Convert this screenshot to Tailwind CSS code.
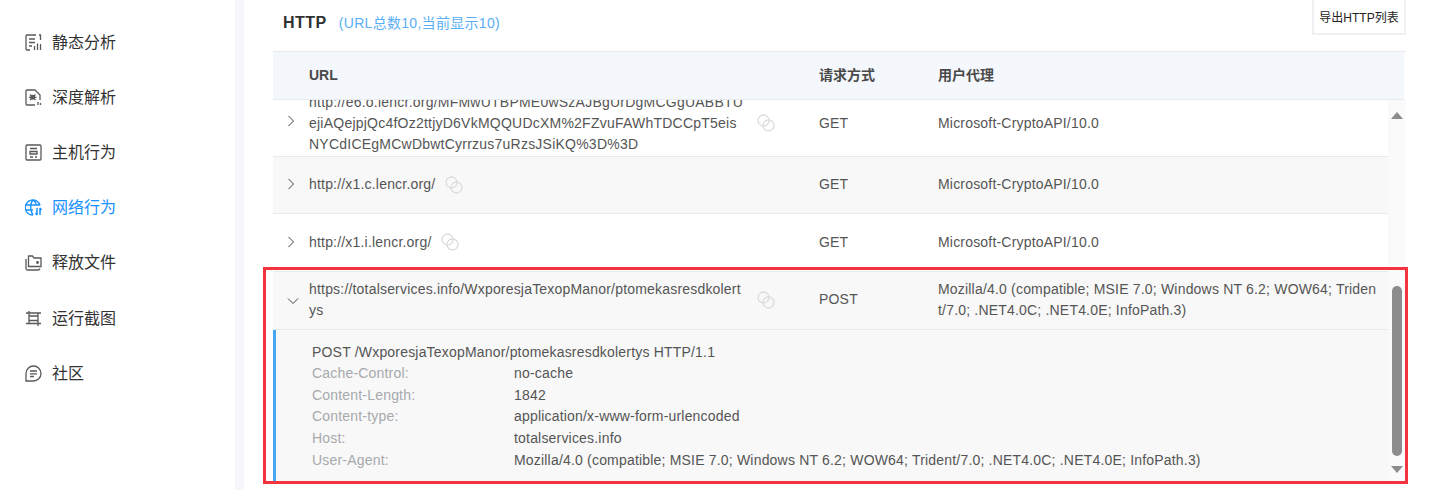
<!DOCTYPE html>
<html lang="zh">
<head>
<meta charset="utf-8">
<script src="https://cdn.jsdelivr.net/npm/@tailwindcss/browser@4"></script>
</head>
<body class="m-0 bg-white">
<div class="relative flex h-[490px] w-[1431px] overflow-hidden bg-white font-['Liberation_Sans','Noto_Sans_CJK_SC',sans-serif] text-sm tracking-[0.19px] text-[#555]">
  <aside class="w-[235px] shrink-0 pt-[15px] text-base tracking-normal text-[#333]">
    <div class="flex h-[55px] items-center gap-[10px] pl-[25px]">
      <svg class="size-[17px]" viewBox="0 0 17 17" fill="none" stroke="#595959" stroke-width="1.3"><path d="M11 1H2a1 1 0 0 0-1 1v13a1 1 0 0 0 1 1h3M14 1h1.500v5M4 5h6M4 8.500h6M4 12h3M9.500 16v-4M12.500 16V9.500M15.500 16v-6"/></svg>
      <span>静态分析</span>
    </div>
    <div class="flex h-[55px] items-center gap-[10px] pl-[25px]">
      <svg class="size-[17px]" viewBox="0 0 17 17" fill="none" stroke="#595959" stroke-width="1.3"><path d="M10 16H2a1 1 0 0 1-1-1V2a1 1 0 0 1 1-1h8l5 5v5M5 5.500l5.500 5.500M10.500 5.500 5 11M4 8.300h7.500M13 16v-3M15.500 16v-2"/><circle cx="7.700" cy="8.300" r="1.800" fill="#595959"/></svg>
      <span>深度解析</span>
    </div>
    <div class="flex h-[55px] items-center gap-[10px] pl-[25px]">
      <svg class="size-[17px]" viewBox="0 0 17 17" fill="none" stroke="#595959" stroke-width="1.3"><rect x="1" y="1" width="15" height="15" rx="1"/><path d="M5 4.500h7M5 7.500h7v2.500H5zM5 13h3M10 13h2"/></svg>
      <span>主机行为</span>
    </div>
    <div class="flex h-[55px] items-center gap-[10px] pl-[25px] text-[#1890ff]">
      <svg class="size-[17px]" viewBox="0 0 17 17" fill="none" stroke="#1890ff" stroke-width="1.3"><path d="M15 6.500A7.500 7.500 0 1 0 8 16M1 6h14M1 11h7M8 1C5 4 5 12 8 16M8 1c2 1.500 3 3 3.500 5"/><path d="M12 9v7M15 9v7M10.500 14l1.500 2M16.500 11 15 9" stroke-width="1.500"/></svg>
      <span>网络行为</span>
    </div>
    <div class="flex h-[55px] items-center gap-[10px] pl-[25px]">
      <svg class="size-[17px]" viewBox="0 0 17 17" fill="none" stroke="#595959" stroke-width="1.3"><path d="M1 5v9.500a1.500 1.500 0 0 0 1.500 1.500H13a2 2 0 0 0 2-1.500"/><path d="M3.500 12.500V2h4l1.500 2h7v8.500z"/><circle cx="12.500" cy="8.500" r=".8" fill="#595959"/></svg>
      <span>释放文件</span>
    </div>
    <div class="flex h-[56px] items-center gap-[10px] pl-[25px] pt-[1px]">
      <svg class="size-[17px]" viewBox="0 0 17 17" fill="none" stroke="#595959" stroke-width="1.3"><path d="M1 3h15M1 13.500h15M4 1v12.500M13 3v13M4 6h9v4.500H4z"/></svg>
      <span>运行截图</span>
    </div>
    <div class="flex h-[55px] items-center gap-[10px] pl-[25px]">
      <svg class="size-[17px]" viewBox="0 0 17 17" fill="none" stroke="#595959" stroke-width="1.3"><path d="M1 16V8.500A7.500 7.500 0 1 1 8.500 16z"/><path d="M5 6h7M5 8.800h7M5 11.500h4"/></svg>
      <span>社区</span>
    </div>
  </aside>
  <div class="w-[9px] shrink-0 bg-[#f5f7fb]"></div>
  <main class="flex-1 pl-[29px]">
    <header class="flex h-[51px] items-start justify-between pr-[25px]">
      <div class="flex items-baseline pl-[10px] pt-[11px]">
        <span class="text-base font-bold tracking-[0.5px] text-[#303133]">HTTP</span>
        <span class="ml-[12px] tracking-[0.3px] text-[#5aaef5]">(URL总数10,当前显示10)</span>
      </div>
      <div class="-mt-[3px] flex h-[38px] w-[94px] items-center justify-center border-2 border-[#eef0f3] pt-[4px] text-xs tracking-normal whitespace-nowrap text-[#222]">导出HTTP列表</div>
    </header>
    <div class="w-[1133px] border-t border-[#e8eaed]">
      <div class="grid h-[48px] w-[1131px] grid-cols-[36px_510px_119px_1fr] items-center border-b border-[#e8eaed] bg-[#f4f7fb] pb-[2px] text-sm font-bold tracking-normal text-[#4a4a4a]">
        <span></span><span>URL</span><span>请求方式</span><span>用户代理</span>
      </div>
      <div class="relative h-[383px] overflow-hidden">
        <div class="-mt-[11px] mr-[18px]">
          <div class="grid h-[68px] grid-cols-[36px_510px_119px_1fr] items-center border-b border-[#e8eaed]">
            <div class="flex justify-center pb-[3px]"><svg class="h-[12px] w-[8px]" viewBox="0 0 8 12" fill="none" stroke="#444" stroke-width="1"><path d="M1.500 1l5 5-5 5"/></svg></div>
            <div class="flex items-center">
              <div class="w-[436px] pt-[1px] leading-[21px] tracking-[0.23px] break-all">http://e6.o.lencr.org/MFMwUTBPME0wSzAJBgUrDgMCGgUABBTU<br>ejiAQejpjQc4fOz2ttjyD6VkMQQUDcXM%2FZvuFAWhTDCCpT5eis<br>NYCdICEgMCwDbwtCyrrzus7uRzsJSiKQ%3D%3D</div>
              <svg class="ml-[12px] size-[18px]" viewBox="0 0 18 18" fill="none" stroke="#dcdcdc" stroke-width="1.300"><circle cx="6.500" cy="6.500" r="5.500"/><circle cx="11.500" cy="11.500" r="5.500"/></svg>
            </div>
            <span>GET</span><span>Microsoft-CryptoAPI/10.0</span>
          </div>
          <div class="grid h-[57px] grid-cols-[36px_510px_119px_1fr] items-center border-b border-[#e8eaed] bg-[#f8f8f8] pb-[2px]">
            <div class="flex justify-center"><svg class="h-[12px] w-[8px]" viewBox="0 0 8 12" fill="none" stroke="#444" stroke-width="1"><path d="M1.500 1l5 5-5 5"/></svg></div>
            <div class="flex items-center"><span>http://x1.c.lencr.org/</span><svg class="ml-[10px] mt-[1px] size-[18px]" viewBox="0 0 18 18" fill="none" stroke="#dcdcdc" stroke-width="1.300"><circle cx="6.500" cy="6.500" r="5.500"/><circle cx="11.500" cy="11.500" r="5.500"/></svg></div>
            <span>GET</span><span>Microsoft-CryptoAPI/10.0</span>
          </div>
          <div class="grid h-[58px] grid-cols-[36px_510px_119px_1fr] items-center border-b border-[#e8eaed] pb-[2px]">
            <div class="flex justify-center"><svg class="h-[12px] w-[8px]" viewBox="0 0 8 12" fill="none" stroke="#444" stroke-width="1"><path d="M1.500 1l5 5-5 5"/></svg></div>
            <div class="flex items-center"><span>http://x1.i.lencr.org/</span><svg class="ml-[10px] size-[18px]" viewBox="0 0 18 18" fill="none" stroke="#dcdcdc" stroke-width="1.300"><circle cx="6.500" cy="6.500" r="5.500"/><circle cx="11.500" cy="11.500" r="5.500"/></svg></div>
            <span>GET</span><span>Microsoft-CryptoAPI/10.0</span>
          </div>
          <div class="grid h-[58px] grid-cols-[36px_510px_119px_1fr] items-center border-b border-[#e8eaed] bg-[#f8f8f8] pb-[2px] leading-[21px]">
            <div class="flex justify-center pl-[3px] pt-[2px]"><svg class="size-[12px]" viewBox="0 0 12 12" fill="none" stroke="#444" stroke-width="1"><path d="M1 3.500l5 5 5-5"/></svg></div>
            <div class="flex items-center">
              <div class="w-[436px] break-all">https://totalservices.info/WxporesjaTexopManor/ptomekasresdkolertys</div>
              <svg class="ml-[12px] size-[18px]" viewBox="0 0 18 18" fill="none" stroke="#dcdcdc" stroke-width="1.300"><circle cx="6.500" cy="6.500" r="5.500"/><circle cx="11.500" cy="11.500" r="5.500"/></svg>
            </div>
            <span>POST</span>
            <span class="break-all pr-[10px]">Mozilla/4.0 (compatible; MSIE 7.0; Windows NT 6.2; WOW64; Trident/7.0; .NET4.0C; .NET4.0E; InfoPath.3)</span>
          </div>
          <div class="h-[153px] border-l-[3px] border-[#44a7f4] bg-[#f8f8f8] pl-[36px] pt-[11.600px] leading-[21.600px]">
            <div>POST /WxporesjaTexopManor/ptomekasresdkolertys HTTP/1.1</div>
            <div class="grid grid-cols-[202px_1fr]">
              <span class="text-[#a6a9ad]">Cache-Control:</span><span>no-cache</span>
              <span class="text-[#a6a9ad]">Content-Length:</span><span>1842</span>
              <span class="text-[#a6a9ad]">Content-type:</span><span>application/x-www-form-urlencoded</span>
              <span class="text-[#a6a9ad]">Host:</span><span>totalservices.info</span>
              <span class="text-[#a6a9ad]">User-Agent:</span><span>Mozilla/4.0 (compatible; MSIE 7.0; Windows NT 6.2; WOW64; Trident/7.0; .NET4.0C; .NET4.0E; InfoPath.3)</span>
            </div>
          </div>
        </div>
        <div class="absolute top-0 right-0 h-[383px] w-[18px] bg-[#fafafa]">
          <div class="absolute top-[12px] left-[3px] h-0 w-0 border-x-[6px] border-b-[7px] border-x-transparent border-b-[#8c8c8c]"></div>
          <div class="absolute top-[186px] left-[4px] h-[170px] w-[10px] rounded-[5px] bg-[#8c8c8c]"></div>
          <div class="absolute top-[366px] left-[3px] h-0 w-0 border-x-[6px] border-t-[7px] border-x-transparent border-t-[#8c8c8c]"></div>
        </div>
      </div>
    </div>
  </main>
  <div class="absolute top-[267px] left-[263px] h-[217px] w-[1145px] border-[3px] border-[#f5333f]"></div>
</div>
</body>
</html>
